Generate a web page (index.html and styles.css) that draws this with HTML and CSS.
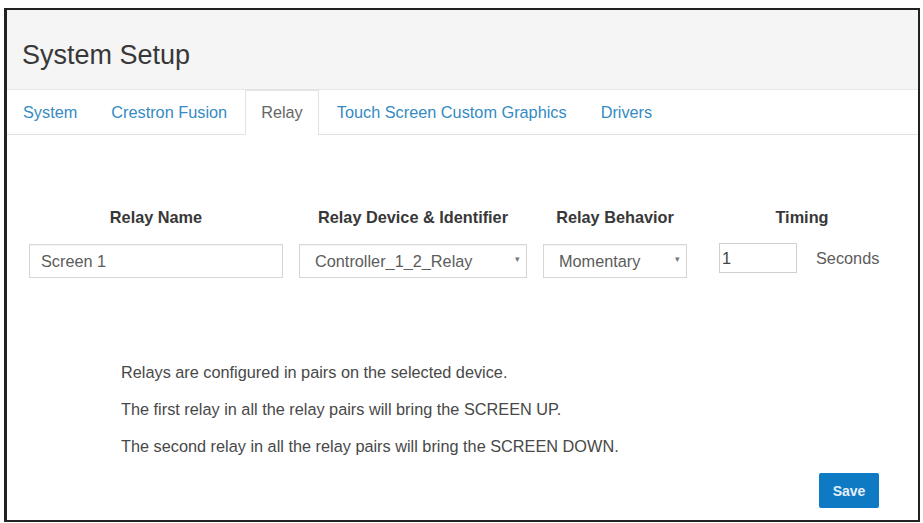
FILE: index.html
```html
<!DOCTYPE html>
<html lang="en">
<head>
    <meta charset="UTF-8">
    <meta name="viewport" content="width=device-width, initial-scale=1.0">
    <title>System Setup</title>
    <link rel="stylesheet" href="styles.css">
</head>
<body>
    <div class="window">
        <div class="page-header">
            <h1>System Setup</h1>
        </div>

        <ul class="tabs">
            <li><a href="#">System</a></li>
            <li><a href="#">Crestron Fusion</a></li>
            <li class="active"><a href="#">Relay</a></li>
            <li><a href="#">Touch Screen Custom Graphics</a></li>
            <li><a href="#">Drivers</a></li>
        </ul>

        <div class="content">
            <div class="relay-grid">
                <div class="col-head">Relay Name</div>
                <div class="col-head">Relay Device &amp; Identifier</div>
                <div class="col-head">Relay Behavior</div>
                <div class="col-head timing">Timing</div>

                <input class="field" type="text" value="Screen 1">
                <div class="select-wrap">
                    <select class="field">
                        <option>Controller_1_2_Relay</option>
                    </select>
                </div>
                <div class="select-wrap">
                    <select class="field">
                        <option>Momentary</option>
                        <option>Latching</option>
                    </select>
                </div>
                <div class="timing timing-row">
                    <input class="seconds-input" type="text" value="1">
                    <span>Seconds</span>
                </div>
            </div>

            <div class="notes">
                <p>Relays are configured in pairs on the selected device.</p>
                <p>The first relay in all the relay pairs will bring the SCREEN UP.</p>
                <p>The second relay in all the relay pairs will bring the SCREEN DOWN.</p>
            </div>

            <div class="actions">
                <button class="btn-save">Save</button>
            </div>
        </div>
    </div>
</body>
</html>
```

FILE: styles.css
```css
body {
    margin: 0;
    background: #fff;
    font-family: "Liberation Sans", Arial, sans-serif;
    font-size: 16.3px;
    color: #333;
}
.window {
    margin: 8px 3px 0 4px;
    height: 514px;
    box-sizing: border-box;
    border: 2px solid #222;
    border-left-width: 3px;
    display: flex;
    flex-direction: column;
}
.page-header {
    height: 80px;
    box-sizing: border-box;
    padding: 30px 15px 0;
    background: #f5f5f5;
    border-bottom: 1px solid #e6e6e6;
}
.page-header h1 {
    margin: 0;
    font-size: 27px;
    line-height: 30px;
    font-weight: normal;
    color: #383838;
}
.tabs {
    list-style: none;
    margin: 0;
    padding: 0;
    display: flex;
    border-bottom: 1px solid #e2e2e2;
}
.tabs li {
    margin-right: 2px;
    margin-bottom: -1px;
}
.tabs a {
    display: block;
    padding: 11px 15px 12px;
    line-height: 20px;
    border: 1px solid transparent;
    border-bottom: none;
    color: #358bc3;
    text-decoration: none;
}
.tabs .active a {
    color: #666;
    background: #fff;
    border-color: #e2e2e2;
    padding-bottom: 13px;
}
.content {
    flex: 1;
    padding: 72px 22px 0;
}
.relay-grid {
    display: grid;
    grid-template-columns: 254px 228px 144px 182px;
    column-gap: 16px;
    row-gap: 17px;
}
.col-head {
    text-align: center;
    font-weight: bold;
    line-height: 20px;
    color: #383838;
}
.timing {
    padding-left: 16px;
}
.field {
    width: 100%;
    height: 34px;
    box-sizing: border-box;
    border: 1px solid #d6d6d6;
    border-radius: 0;
    background: #fff;
    padding: 0 11px;
    font-family: inherit;
    font-size: 16.3px;
    color: #5c5c5c;
    box-shadow: inset 0 1px 1px rgba(0, 0, 0, 0.04);
}
.select-wrap {
    position: relative;
}
.select-wrap select {
    appearance: none;
    -webkit-appearance: none;
    padding-left: 15px;
}
.select-wrap::after {
    content: "\25BE";
    position: absolute;
    right: 7px;
    top: 10px;
    font-size: 9px;
    color: #777;
    pointer-events: none;
}
.timing-row {
    display: flex;
    align-items: center;
    height: 34px;
    margin-top: -3px;
    color: #5c5c5c;
}
.seconds-input {
    width: 78px;
    height: 30px;
    box-sizing: border-box;
    border: 1px solid #d0d0d0;
    padding: 0 2px;
    margin-right: 19px;
    font-family: inherit;
    font-size: 16.3px;
    color: #444;
}
.notes {
    margin-top: 84px;
    padding-left: 92px;
    color: #484848;
}
.notes p {
    margin: 0 0 17px;
    line-height: 20px;
}
.notes p:last-child {
    margin-bottom: 0;
}
.actions {
    display: flex;
    justify-content: flex-end;
    margin-top: 17px;
    padding-right: 17px;
}
.btn-save {
    width: 60px;
    height: 35px;
    border: none;
    border-radius: 2px;
    background: #0e7ac4;
    color: #e3f0fa;
    font-family: inherit;
    font-size: 14px;
    font-weight: bold;
    cursor: pointer;
}
```
